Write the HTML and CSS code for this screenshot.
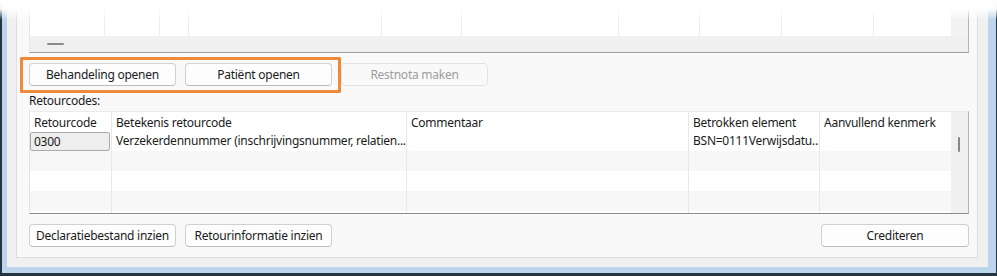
FILE: index.html
```html
<!DOCTYPE html>
<html>
<head>
<meta charset="utf-8">
<link rel="stylesheet" href="styles.css">
</head>
<body>
<div class="window">
  <div class="frame">
    <div class="client">
      <div class="panel">
        <div class="topgrid">
          <div class="tg-main">
            <div class="tg-rows">
              <div class="tg-col" style="width:75px"></div>
              <div class="tg-col" style="width:55px"></div>
              <div class="tg-col" style="width:29px"></div>
              <div class="tg-col" style="width:193px"></div>
              <div class="tg-col" style="width:80px"></div>
              <div class="tg-col" style="width:157px"></div>
              <div class="tg-col" style="width:81px"></div>
              <div class="tg-col" style="width:82px"></div>
              <div class="tg-col" style="width:92px"></div>
              <div class="tg-col tg-last"></div>
            </div>
            <div class="tg-vscroll"></div>
          </div>
          <div class="tg-hscroll"><span class="hthumb"></span></div>
        </div>

        <div class="btnrow">
          <button class="btn">Behandeling openen</button>
          <button class="btn">Patiënt openen</button>
          <button class="btn disabled">Restnota maken</button>
        </div>

        <div class="label">Retourcodes:</div>

        <div class="table">
          <div class="rows">
            <div class="row head">
              <div class="cell">Retourcode</div>
              <div class="cell">Betekenis retourcode</div>
              <div class="cell">Commentaar</div>
              <div class="cell">Betrokken element</div>
              <div class="cell">Aanvullend kenmerk</div>
            </div>
            <div class="row">
              <div class="cell sel"><span class="selbox">0300</span></div>
              <div class="cell">Verzekerdennummer (inschrijvingsnummer, relatien...</div>
              <div class="cell"></div>
              <div class="cell">BSN=0111Verwijsdatu...</div>
              <div class="cell"></div>
            </div>
            <div class="row alt">
              <div class="cell"></div><div class="cell"></div><div class="cell"></div><div class="cell"></div><div class="cell"></div>
            </div>
            <div class="row">
              <div class="cell"></div><div class="cell"></div><div class="cell"></div><div class="cell"></div><div class="cell"></div>
            </div>
            <div class="row alt">
              <div class="cell"></div><div class="cell"></div><div class="cell"></div><div class="cell"></div><div class="cell"></div>
            </div>
            <div class="row">
              <div class="cell"></div><div class="cell"></div><div class="cell"></div><div class="cell"></div><div class="cell"></div>
            </div>
          </div>
          <div class="vscroll"><span class="vthumb"></span></div>
        </div>

        <div class="btnrow bottom">
          <button class="btn">Declaratiebestand inzien</button>
          <button class="btn">Retourinformatie inzien</button>
          <span class="spacer"></span>
          <button class="btn wide">Crediteren</button>
        </div>

        <div class="highlight"></div>
      </div>
    </div>
  </div>
  <div class="fade"></div>
</div>
</body>
</html>
```

FILE: styles.css
```css
html, body {
  margin: 0;
  padding: 0;
  background: #ffffff;
}
body {
  font-family: "Noto Sans", "Open Sans", sans-serif;
  font-size: 12px;
  letter-spacing: -0.25px;
  color: #1b1b1b;
}
.window {
  position: relative;
  width: 997px;
  height: 276px;
  box-sizing: border-box;
  background: #26343f;
  padding: 0 1px 3px 2px;
  display: flex;
}
.frame {
  flex: 1;
  display: flex;
  background: #bcd4ec;
  padding: 0 8px 6px 5px;
}
.client {
  flex: 1;
  display: flex;
  background: #f0f0f0;
  padding: 0 10px 9px 9px;
}
.panel {
  flex: 1;
  position: relative;
  display: flex;
  flex-direction: column;
  background: #f9f9f9;
  border: 1px solid #dedede;
  border-top: 0;
  padding: 0 8px 0 12px;
}

/* upper grid remnant */
.topgrid {
  height: 53px;
  box-sizing: border-box;
  display: flex;
  flex-direction: column;
  border-left: 1px solid #e6e6e6;
  border-right: 1px solid #b4b4b4;
  border-bottom: 1px solid #9e9e9e;
}
.tg-main {
  height: 36px;
  display: flex;
}
.tg-rows {
  flex: 1;
  display: flex;
  background: #ffffff;
}
.tg-col {
  box-sizing: border-box;
  border-right: 1px solid #ededed;
}
.tg-last {
  flex: 1;
  border-right: 0;
}
.tg-vscroll {
  width: 17px;
  background: #f2f2f2;
}
.tg-hscroll {
  height: 16px;
  background: #f0f0f0;
}
.hthumb {
  display: block;
  width: 17px;
  height: 2px;
  margin: 7px 0 0 17px;
  background: #8a8a8a;
  border-radius: 1px;
}

/* buttons */
.btnrow {
  display: flex;
  gap: 9px;
  margin-top: 10px;
}
.btn {
  width: 147px;
  height: 23px;
  box-sizing: border-box;
  padding: 0;
  font-family: inherit;
  font-size: 12px;
  letter-spacing: -0.25px;
  color: #1b1b1b;
  background: #fdfdfd;
  border: 1px solid #d0d0d0;
  border-bottom-color: #bcbcbc;
  border-radius: 4px;
  line-height: 20px;
}
.btn.wide {
  width: 148px;
}
.btn.disabled {
  color: #9d9d9d;
  background: #f9f9f9;
  border-color: #e3e3e3;
}
.spacer {
  flex: 1;
}

.label {
  margin-top: 7px;
  line-height: 16px;
}

/* table */
.table {
  margin-top: 2px;
  height: 103px;
  box-sizing: border-box;
  display: flex;
  border-left: 1px solid #e3e3e3;
  border-top: 1px solid #ebebeb;
  border-right: 1px solid #b4b4b4;
  border-bottom: 1px solid #8c8c8c;
  overflow: hidden;
}
.rows {
  flex: 1;
  display: flex;
  flex-direction: column;
  background: #ffffff;
  overflow: hidden;
}
.row {
  flex: none;
  height: 20px;
  display: grid;
  grid-template-columns: 82px 295px 282px 131px 1fr;
}
.row.head {
  height: 19px;
}
.row.alt {
  background: #f7f7f7;
}
.cell {
  box-sizing: border-box;
  border-right: 1px solid #e8e8e8;
  padding: 0 4px;
  line-height: 20px;
  white-space: nowrap;
  overflow: hidden;
}
.row.head .cell {
  line-height: 19px;
  padding-top: 1px;
}
.cell:last-child {
  border-right: 0;
}
.cell.sel {
  padding: 1px 1px 0 0;
}
.selbox {
  display: block;
  height: 19px;
  box-sizing: border-box;
  background: #eeeeee;
  border: 1px solid #aaaaaa;
  border-radius: 2px;
  padding-left: 3px;
  line-height: 17px;
}
.vscroll {
  width: 17px;
  background: #f0f0f0;
}
.vthumb {
  display: block;
  width: 2px;
  height: 15px;
  margin: 25px 0 0 7px;
  background: #888888;
  border-radius: 1px;
}

/* orange highlight over the top button group */
.highlight {
  position: absolute;
  left: 3px;
  top: 57px;
  width: 321px;
  height: 36px;
  box-sizing: border-box;
  border: 3px solid #ef8a3a;
  border-radius: 1px;
  pointer-events: none;
}

/* washed-out top edge of the screenshot */
.fade {
  position: absolute;
  left: 0;
  top: 0;
  right: 0;
  height: 20px;
  background: linear-gradient(to bottom, rgba(255,255,255,1) 0px, rgba(255,255,255,0.95) 9px, rgba(255,255,255,0) 20px);
  pointer-events: none;
}
```
